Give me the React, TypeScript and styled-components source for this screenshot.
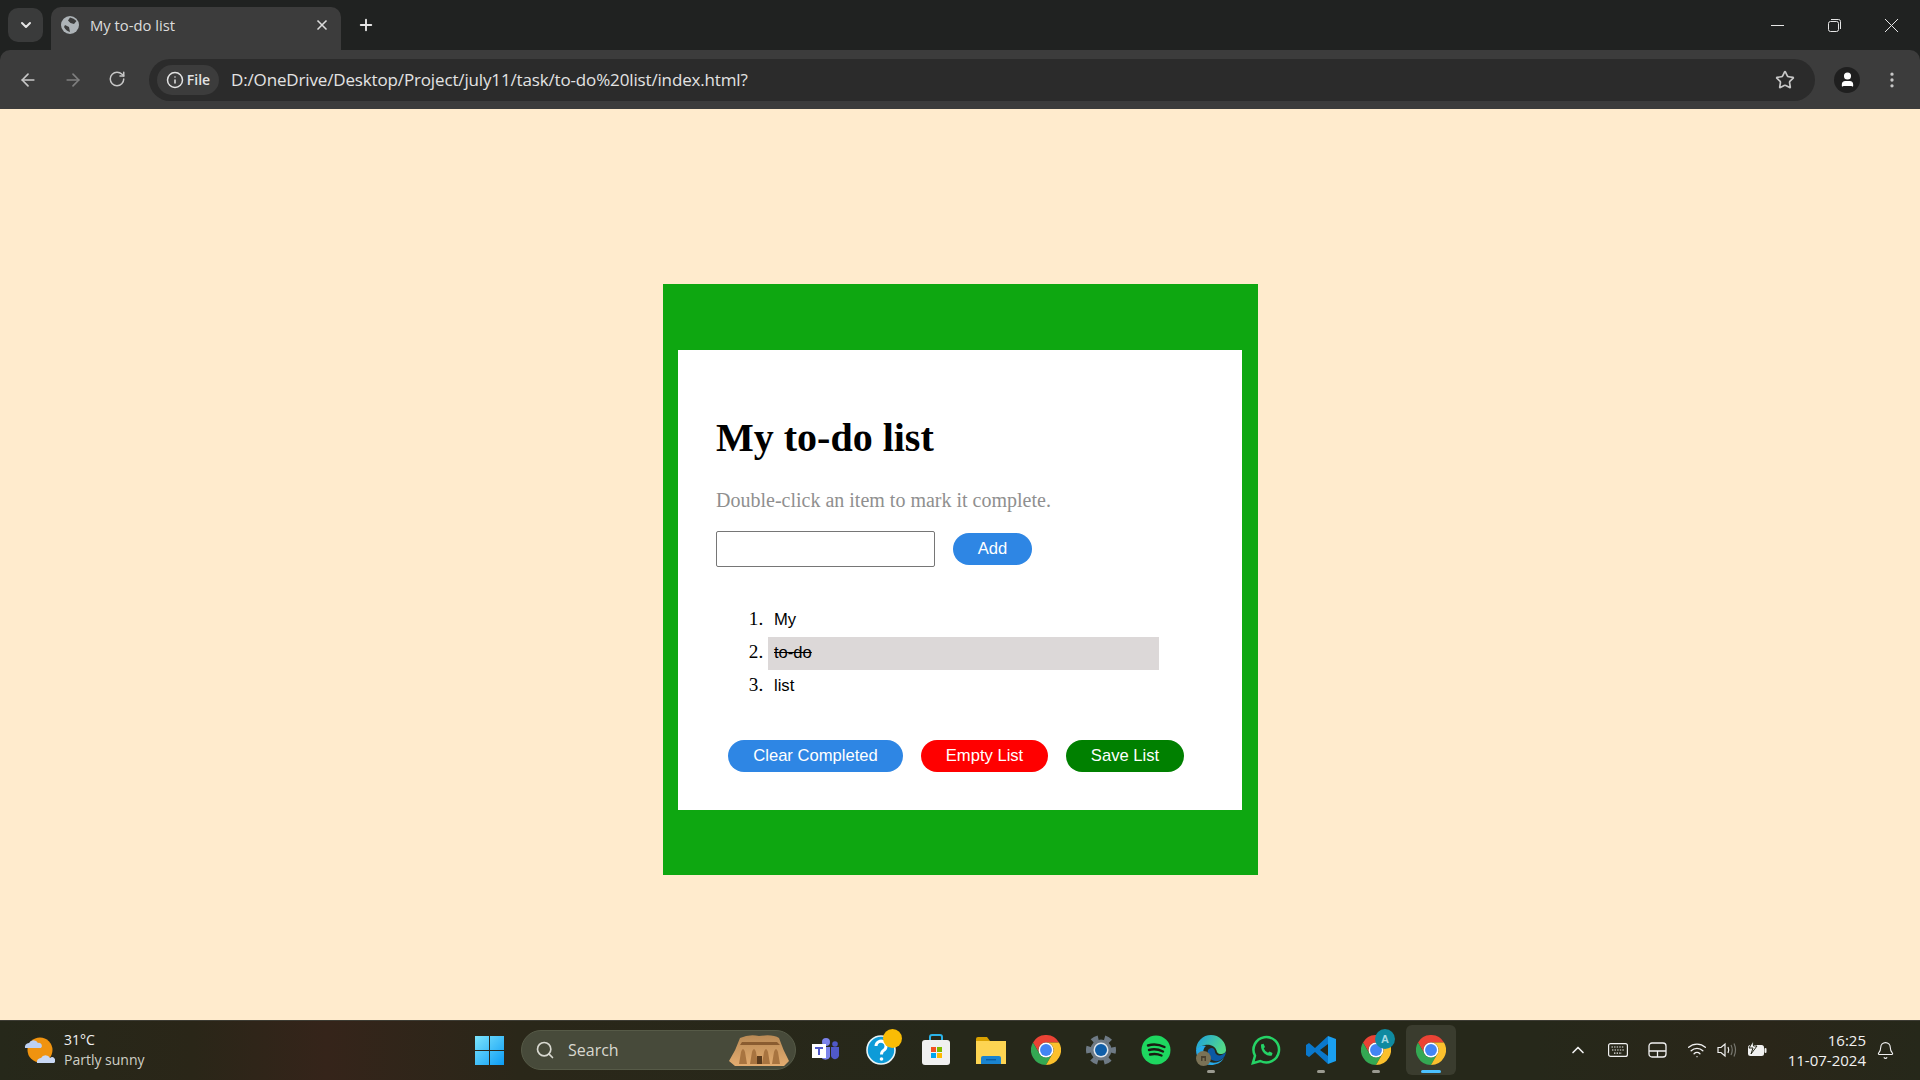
import styled, { createGlobalStyle } from 'styled-components';
import { ArrowLeft, ArrowRight, Bell, ChevronDown, ChevronUp, EllipsisVertical, Info, Plus, RotateCw, Search, Star, User, Wifi, X } from 'lucide-react';

const GlobalStyle = createGlobalStyle`
  html, body { margin: 0; padding: 0; height: 100%; }
  body { font-family: "Liberation Serif", serif; background: #ffebcd; overflow: hidden; }
  * { box-sizing: border-box; }
`;

const Screen = styled.div`
  width: 1920px;
  height: 1080px;
  background: #202221;
  display: flex;
  flex-direction: column;
`;

const TabStrip = styled.div`
  height: 50px;
  display: flex;
  align-items: flex-end;
  padding-left: 8px;
  color: #e6e6e6;
  font-family: "Open Sans", "Liberation Sans", sans-serif;
`;

const TabMenu = styled.div`
  width: 35px;
  height: 34px;
  margin-bottom: 8px;
  border-radius: 10px;
  background: #3a3b3b;
  display: flex;
  align-items: center;
  justify-content: center;
`;

const Tab = styled.div`
  width: 290px;
  height: 43px;
  margin-left: 8px;
  padding: 0 11px 7px 10px;
  border-radius: 10px 10px 0 0;
  background: #3c3c3c;
  display: flex;
  align-items: center;
  gap: 11px;
  font-size: 14.8px;
  color: #dcdcdc;
`;

const TabTitle = styled.span`
  flex: 1;
`;

const NewTab = styled.div`
  width: 36px;
  height: 36px;
  margin: 0 0 7px 7px;
  display: flex;
  align-items: center;
  justify-content: center;
`;

const WindowButtons = styled.div`
  margin-left: auto;
  display: flex;
  align-self: stretch;
  align-items: center;
  padding-right: 22px;
  gap: 44px;
`;

const Toolbar = styled.div`
  height: 59px;
  background: #3c3c3c;
  border-radius: 10px 10px 0 0;
  display: flex;
  align-items: center;
  padding-left: 18px;
  color: #c7c7c7;
`;

const NavButton = styled.div<{ $dim?: boolean }>`
  width: 20px;
  height: 20px;
  margin-right: 25px;
  color: ${(p) => (p.$dim ? '#7f7f7f' : '#c7c7c7')};
  display: flex;
`;

const Omnibox = styled.div`
  width: 1666px;
  height: 42px;
  margin-left: -4px;
  border-radius: 21px;
  background: #2b2b2b;
  display: flex;
  align-items: center;
  padding: 0 20px 0 8px;
`;

const SiteChip = styled.div`
  width: 62px;
  height: 30px;
  border-radius: 15px;
  background: #3c3c3c;
  display: flex;
  align-items: center;
  justify-content: center;
  gap: 3px;
  color: #e3e3e3;
  font: 600 14px "Open Sans", "Liberation Sans", sans-serif;
`;

const Url = styled.span`
  margin-left: 12px;
  flex: 1;
  color: #e3e3e3;
  font: 17px "Open Sans", "Liberation Sans", sans-serif;
  letter-spacing: -0.15px;
`;

const Avatar = styled.div`
  width: 26px;
  height: 26px;
  margin-left: 19px;
  border-radius: 50%;
  background: #1f1f1f;
  display: flex;
  align-items: center;
  justify-content: center;
`;

const MoreIcon = styled(EllipsisVertical)`
  margin-left: 22px;
`;

const Page = styled.main`
  flex: 1;
  display: flex;
  justify-content: center;
  padding: 175px 0 0 1px;
  background: #ffebcd;
`;

const Card = styled.section`
  width: 595px;
  height: 591px;
  background: #0ea711;
  padding: 66px 16px 65px 15px;
`;

const Sheet = styled.div`
  height: 460px;
  background: #fff;
  padding: 65px 38px 0;
`;

const Heading = styled.h1`
  margin: 0;
  font: bold 40px/46px "Liberation Serif", serif;
  color: #000;
`;

const Hint = styled.p`
  margin: 28px 0 0;
  font: 20px/22px "Liberation Serif", serif;
  color: #8f8f8f;
`;

const AddRow = styled.div`
  margin-top: 20px;
  display: flex;
  align-items: center;
  gap: 18px;
`;

const TextInput = styled.input`
  width: 219px;
  height: 36px;
  border: 1px solid #767676;
  border-radius: 2px;
  background: #fff;
`;

const Pill = styled.button<{ $bg: string; $w: number }>`
  width: ${(p) => p.$w}px;
  height: 32px;
  padding: 0;
  border: none;
  border-radius: 16px;
  background: ${(p) => p.$bg};
  color: #fff;
  font: 16.6px "Liberation Sans", sans-serif;
`;

const List = styled.ol`
  margin: 37px 0 0;
  padding: 0 0 0 52px;
  width: 443px;
  font: 19.2px "Liberation Serif", serif;
`;

const Item = styled.li<{ $done?: boolean }>`
  height: 33px;
  line-height: 30px;
  padding-left: 6px;
  background: ${(p) => (p.$done ? '#dcd8d8' : 'transparent')};
`;

const ItemText = styled.span<{ $done?: boolean }>`
  font-family: "Liberation Sans", sans-serif;
  font-size: 16.6px;
  text-decoration: ${(p) => (p.$done ? 'line-through' : 'none')};
`;

const Actions = styled.div`
  margin: 37px 0 0 12px;
  display: flex;
  gap: 18px;
`;

const Taskbar = styled.footer`
  height: 60px;
  padding-bottom: 1px;
  border-top: 1px solid #3d3c34;
  background: linear-gradient(90deg, #26281a 0%, #2a2618 10%, #35241a 17%, #2a2719 27%, #26281a 50%, #26281a 80%, #2a2619 92%, #26281a 100%);
  display: flex;
  align-items: center;
  color: #f1f1f1;
  font-family: "Open Sans", "Liberation Sans", sans-serif;
`;

const Weather = styled.div`
  width: 475px;
  padding-left: 23px;
  display: flex;
  align-items: center;
  gap: 9px;
`;

const WeatherText = styled.div`
  font-size: 14px;
  line-height: 20px;
  color: #f1f1f1;
`;

const WeatherSub = styled.div`
  color: #cfcfc6;
`;

const SearchBox = styled.div`
  width: 275px;
  height: 40px;
  margin-left: 17px;
  padding: 0 6px 0 13px;
  border: 1px solid #565a47;
  border-radius: 20px;
  background: #474a3a;
  display: flex;
  align-items: center;
  gap: 13px;
  font-size: 16px;
  color: #d8d8d0;
`;

const SearchLabel = styled.span`
  flex: 1;
`;

const Dock = styled.div`
  margin-left: 5px;
  display: flex;
  align-items: center;
  gap: 5px;
`;

const DockSlot = styled.div<{ $active?: boolean }>`
  width: 50px;
  height: 50px;
  border-radius: 6px;
  background: ${(p) => (p.$active ? '#3a3c2e' : 'transparent')};
  display: flex;
  align-items: center;
  justify-content: center;
  position: relative;
`;

const Dot = styled.span<{ $active?: boolean }>`
  position: absolute;
  bottom: 2px;
  left: 50%;
  width: ${(p) => (p.$active ? 20 : 8)}px;
  height: 3px;
  margin-left: ${(p) => (p.$active ? -10 : -4)}px;
  border-radius: 2px;
  background: ${(p) => (p.$active ? '#4cc2ff' : '#9a9a90')};
`;

const Badge = styled.span`
  position: absolute;
  top: 4px;
  right: 6px;
  width: 20px;
  height: 20px;
  border-radius: 50%;
  background: #0f8aa0;
  color: #a8dbe5;
  font: bold 11px/20px "Liberation Sans", sans-serif;
  text-align: center;
`;

const Tray = styled.div`
  margin-left: auto;
  display: flex;
  align-items: center;
  padding-right: 25px;
`;

const TrayIcons = styled.div`
  display: flex;
  align-items: center;
  gap: 20px;
  margin-right: 21px;
`;

const TrayStatus = styled.div`
  display: flex;
  align-items: center;
  gap: 10px;
`;

const Clock = styled.div`
  text-align: right;
  font-size: 15px;
  line-height: 20px;
  margin-right: 10px;
`;

const Chrome = () => (
  <svg width="30" height="30" viewBox="0 0 48 48">
    <path d="M3.2 12 A24 24 0 0 1 44.8 12 H24 A12 12 0 0 0 13.6 30 Z" fill="#ea4335" />
    <path d="M3.2 12 L13.6 30 A12 12 0 0 0 34.4 30 L24 48 A24 24 0 0 1 3.2 12 Z" fill="#34a853" />
    <path d="M44.8 12 A24 24 0 0 1 24 48 L34.4 30 A12 12 0 0 0 24 12 Z" fill="#fbc02d" />
    <circle cx="24" cy="24" r="12" fill="#fff" />
    <circle cx="24" cy="24" r="9.5" fill="#4285f4" />
  </svg>
);

const App = () => (
  <>
    <GlobalStyle />
    <Screen>
      <TabStrip>
        <TabMenu>
          <ChevronDown size={16} strokeWidth={3} />
        </TabMenu>
        <Tab>
          <svg width="18" height="18" viewBox="0 0 18 18">
            <circle cx="9" cy="9" r="9" fill="#aeb4b8" />
            <path d="M9 1.5 Q13 2 15.5 5 L13 8 L9.5 7 L7 4.5 Z M4 9 L8 11 L9 16 Q5 15 3 11 Z" fill="#3c3c3c" />
          </svg>
          <TabTitle>My to-do list</TabTitle>
          <X size={16} strokeWidth={2.5} />
        </Tab>
        <NewTab>
          <Plus size={18} strokeWidth={2.5} />
        </NewTab>
        <WindowButtons>
          <svg width="13" height="13" viewBox="0 0 13 13" stroke="#e6e6e6">
            <path d="M0 6.5 H13" />
          </svg>
          <svg width="13" height="13" viewBox="0 0 13 13" fill="none" stroke="#e6e6e6">
            <rect x="0.5" y="2.5" width="10" height="10" rx="2" />
            <path d="M3 0.5 H10.5 A2 2 0 0 1 12.5 2.5 V10" />
          </svg>
          <svg width="13" height="13" viewBox="0 0 13 13" stroke="#e6e6e6">
            <path d="M0 0 L13 13 M13 0 L0 13" />
          </svg>
        </WindowButtons>
      </TabStrip>
      <Toolbar>
        <NavButton><ArrowLeft size={20} /></NavButton>
        <NavButton $dim><ArrowRight size={20} /></NavButton>
        <NavButton><RotateCw size={18} /></NavButton>
        <Omnibox>
          <SiteChip><Info size={18} />File</SiteChip>
          <Url>D:/OneDrive/Desktop/Project/july11/task/to-do%20list/index.html?</Url>
          <Star size={20} strokeWidth={2} />
        </Omnibox>
        <Avatar><User size={17} color="#fff" fill="#fff" /></Avatar>
        <MoreIcon size={20} />
      </Toolbar>
      <Page>
        <Card>
          <Sheet>
            <Heading>My to-do list</Heading>
            <Hint>Double-click an item to mark it complete.</Hint>
            <AddRow>
              <TextInput />
              <Pill $bg="#2e86e4" $w={79}>Add</Pill>
            </AddRow>
            <List>
              <Item><ItemText>My</ItemText></Item>
              <Item $done><ItemText $done>to-do</ItemText></Item>
              <Item><ItemText>list</ItemText></Item>
            </List>
            <Actions>
              <Pill $bg="#2e86e4" $w={175}>Clear Completed</Pill>
              <Pill $bg="#ff0000" $w={127}>Empty List</Pill>
              <Pill $bg="#008000" $w={118}>Save List</Pill>
            </Actions>
          </Sheet>
        </Card>
      </Page>
      <Taskbar>
        <Weather>
          <svg width="32" height="32" viewBox="0 0 32 32">
            <circle cx="17" cy="16" r="12.5" fill="#f0930f" />
            <path d="M2 14 a4 4 0 0 1 4 -5 a5 5 0 0 1 9 0 a3 3 0 0 1 3 5 Z" fill="#bcd0f2" />
            <path d="M14 29 a4 4 0 0 1 4 -5 a5 5 0 0 1 9 0 a3 3 0 0 1 4 5 Z" fill="#c9d8f4" />
          </svg>
          <WeatherText>31°C<WeatherSub>Partly sunny</WeatherSub></WeatherText>
        </Weather>
        <svg width="29" height="29" viewBox="0 0 29 29">
          <defs>
            <linearGradient id="winLogo" x1="0" y1="0" x2="1" y2="1">
              <stop offset="0" stopColor="#7ce4fc" />
              <stop offset="1" stopColor="#0c9cf5" />
            </linearGradient>
          </defs>
          <path d="M0 0 H14 V14 H0 Z M15 0 H29 V14 H15 Z M0 15 H14 V29 H0 Z M15 15 H29 V29 H15 Z" fill="url(#winLogo)" />
        </svg>
        <SearchBox>
          <Search size={20} />
          <SearchLabel>Search</SearchLabel>
          <svg width="60" height="32" viewBox="0 0 60 32">
            <defs>
              <linearGradient id="temple" x1="0" y1="0" x2="0" y2="1">
                <stop offset="0" stopColor="#b98a55" />
                <stop offset="1" stopColor="#e3ac70" />
              </linearGradient>
            </defs>
            <path d="M11 4 Q20 0 30 2 Q44 0 50 4 Q54 16 60 27 L55 32 H6 L0 27 Q7 16 11 4 Z" fill="url(#temple)" />
            <path d="M13 8 H48 L51 11 H11 Z" fill="#8a5c30" />
            <path d="M10 30 L12 18 Q14 12 16 18 L18 30 Z M21 30 L23 18 Q25 12 27 18 L29 30 Z M33 30 L35 18 Q37 12 39 18 L41 30 Z M43 30 L45 18 Q47 12 49 18 L51 30 Z" fill="#a87440" />
            <path d="M28 22 H33 V30 H28 Z" fill="#5a3a1c" />
          </svg>
        </SearchBox>
        <Dock>
          <DockSlot>
            <svg width="28" height="26" viewBox="0 0 28 26">
              <circle cx="14" cy="5" r="4" fill="#7b83eb" />
              <circle cx="23" cy="7" r="2.8" fill="#5059c9" />
              <path d="M9 10 H18 V20 A5 5 0 0 1 9 20 Z" fill="#7b83eb" />
              <path d="M19 10 H27 V17 A4 4 0 0 1 19 19 Z" fill="#5059c9" />
              <rect x="0" y="7" width="14" height="14" fill="#fff" />
              <path d="M3 10 H11 V12 H8 V18 H6 V12 H3 Z" fill="#5059c9" />
            </svg>
          </DockSlot>
          <DockSlot>
            <svg width="42" height="42" viewBox="0 0 42 42">
              <circle cx="21" cy="21" r="14" fill="#0d9bd8" stroke="#e8f4f8" strokeWidth="1.6" />
              <path d="M16 17 a5 5 0 1 1 7.5 4.5 q-2 1.2 -2 4" fill="none" stroke="#fff" strokeWidth="3" />
              <circle cx="21.5" cy="30" r="1.8" fill="#fff" />
              <circle cx="32.5" cy="9.5" r="9.5" fill="#f9bc05" />
            </svg>
          </DockSlot>
          <DockSlot>
            <svg width="30" height="32" viewBox="0 0 30 32">
              <path d="M9 8 V3 a2 2 0 0 1 2 -2 h8 a2 2 0 0 1 2 2 v5" fill="none" stroke="#2bb3e8" strokeWidth="2" />
              <rect x="1" y="6" width="28" height="25" rx="3" fill="#f0f0f0" />
              <rect x="10" y="13" width="5" height="5" fill="#f25022" />
              <rect x="16" y="13" width="5" height="5" fill="#7fba00" />
              <rect x="10" y="19" width="5" height="5" fill="#00a4ef" />
              <rect x="16" y="19" width="5" height="5" fill="#ffb900" />
            </svg>
          </DockSlot>
          <DockSlot>
            <svg width="30" height="27" viewBox="0 0 30 27">
              <path d="M0 2 a2 2 0 0 1 2 -2 h9 l3 4 h-14z" fill="#d9a100" />
              <rect x="0" y="4" width="30" height="23" fill="#fdd452" />
              <path d="M5 27 V21 a2 2 0 0 1 2 -2 h16 a2 2 0 0 1 2 2 v6 z" fill="#1a84d0" />
              <rect x="10" y="22" width="10" height="1.4" fill="#0b5ea3" />
            </svg>
          </DockSlot>
          <DockSlot><Chrome /></DockSlot>
          <DockSlot>
            <svg width="30" height="30" viewBox="0 0 30 30">
              <circle cx="15" cy="15" r="10.5" fill="#6e7a85" />
              <circle cx="15" cy="15" r="12.5" fill="none" stroke="#6e7a85" strokeWidth="5" strokeDasharray="6.6 6.49" strokeDashoffset="3.3" />
              <circle cx="15" cy="15" r="7.5" fill="#dfe6ec" />
              <circle cx="15" cy="15" r="6" fill="#0f5ea8" />
            </svg>
          </DockSlot>
          <DockSlot>
            <svg width="30" height="30" viewBox="0 0 30 30">
              <circle cx="15" cy="15" r="14.5" fill="#1ed760" />
              <path d="M7 10.5 Q15 8 23.5 12 M8 15 Q15 13 22 16.5 M9 19.5 Q15 18 20.5 20.5" fill="none" stroke="#1a1a12" strokeWidth="2.4" strokeLinecap="round" />
            </svg>
          </DockSlot>
          <DockSlot>
            <svg width="30" height="31" viewBox="0 0 30 31">
              <defs>
                <linearGradient id="edgeTop" x1="0" y1="0" x2="1" y2="0.4">
                  <stop offset="0" stopColor="#1b9de2" />
                  <stop offset="1" stopColor="#52d88a" />
                </linearGradient>
              </defs>
              <path d="M0 15 A15 15 0 0 1 30 15 C30 20 22 20 21 17 C20 11 14 9 9 10 C4 11 1 13 0 15 Z" fill="url(#edgeTop)" />
              <path d="M0 15 C1 12 5 10 10 11 C6 14 6 22 12 26 C16 29 24 28 28 23 C25 28 20 30 15 30 C7 30 0 24 0 15 Z" fill="#27a9e8" />
              <path d="M12 15 C16 11 19 14 19 17 C20 21 25 22 30 17 C29 25 21 28 16 25 C12 23 11 19 12 15 Z" fill="#0c59a4" />
              <circle cx="7.5" cy="23.5" r="7.5" fill="#7a7256" />
              <path d="M5 21 H10 V26 H8.5 V23 H6.5 V26 H5 Z" fill="#4a4030" />
            </svg>
            <Dot />
          </DockSlot>
          <DockSlot>
            <svg width="30" height="30" viewBox="0 0 24 24" fill="none">
              <path d="M1.5 22.5 L3.2 16.6 A10.2 10.2 0 1 1 7.4 20.8 Z" stroke="#25d366" strokeWidth="2" />
              <path d="M8 7.5 l2 -.5 1.2 2.5 -1 1.2 q1 2.4 3.4 3.4 l1.2 -1 2.4 1.2 -.5 2 q-3 1 -6 -1.5 q-3 -3 -2.7 -7.3z" fill="#25d366" />
            </svg>
          </DockSlot>
          <DockSlot>
            <svg width="30" height="30" viewBox="0 0 30 30">
              <path d="M22 1 L9 13 L3 8 L0 10 V20 L3 22 L9 17 L22 29 V21 L14 15 L22 9 Z" fill="#0a78cc" />
              <path d="M22 1 L30 4 V26 L22 29 Z" fill="#1a9ff0" />
            </svg>
            <Dot />
          </DockSlot>
          <DockSlot>
            <Chrome />
            <Badge>A</Badge>
            <Dot />
          </DockSlot>
          <DockSlot $active>
            <Chrome />
            <Dot $active />
          </DockSlot>
        </Dock>
        <Tray>
          <TrayIcons>
            <ChevronUp size={20} strokeWidth={2} />
            <svg width="20" height="14" viewBox="0 0 20 14" fill="none" stroke="#f1f1f1" strokeWidth="1.2">
              <rect x="0.6" y="0.6" width="18.8" height="12.8" rx="2" />
              <path d="M3.5 4 H16.5 M4 7 H16 M6 10.2 H14" strokeDasharray="1.4 1.2" />
            </svg>
            <svg width="19" height="16" viewBox="0 0 19 16" fill="none" stroke="#f1f1f1" strokeWidth="1.3">
              <rect x="1" y="1" width="17" height="14" rx="3" />
              <path d="M1 9 H18 M9.5 9 V15" />
            </svg>
            <TrayStatus>
              <Wifi size={20} strokeWidth={1.6} />
              <svg width="20" height="16" viewBox="0 0 20 16" fill="none" strokeWidth="1.2">
                <path d="M1 5.5 H4 L8 2 V14 L4 10.5 H1 Z" stroke="#f1f1f1" />
                <path d="M11 5 Q12.5 8 11 11" stroke="#f1f1f1" />
                <path d="M14 3 Q16.5 8 14 13 M17 1.5 Q20 8 17 14.5" stroke="#77776f" />
              </svg>
              <svg width="20" height="18" viewBox="0 0 20 18">
                <rect x="1" y="4" width="16" height="11" rx="2.5" fill="#f1f1f1" />
                <rect x="17.5" y="7" width="2" height="5" rx="1" fill="#f1f1f1" />
                <path d="M6 0 L2 7 H6 L4 13 L10 5 H6.5 Z" fill="#f1f1f1" stroke="#26281a" />
              </svg>
            </TrayStatus>
          </TrayIcons>
          <Clock>16:25<br />11-07-2024</Clock>
          <Bell size={19} strokeWidth={1.4} />
        </Tray>
      </Taskbar>
    </Screen>
  </>
);

export default App;
